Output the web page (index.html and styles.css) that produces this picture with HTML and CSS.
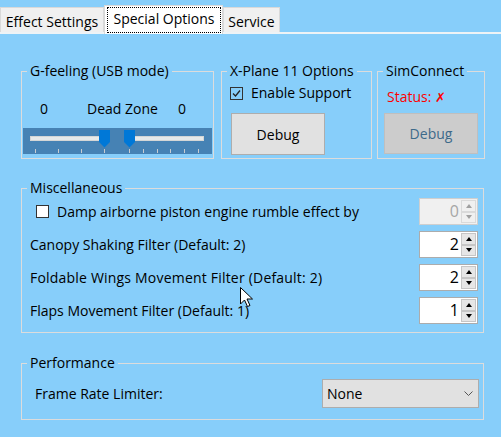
FILE: index.html
```html
<!DOCTYPE html>
<html>
<head>
<meta charset="utf-8">
<link rel="stylesheet" href="styles.css">
</head>
<body>
<div class="tabs">
  <div class="tab t1">Effect Settings</div>
  <div class="tab active"><span class="focus">Special Options</span></div>
  <div class="tab t3">Service</div>
</div>
<div class="page">
  <div class="toprow">
    <fieldset class="group gfeel">
      <legend>G-feeling (USB mode)</legend>
      <div class="dz"><span>0</span><span class="dzl">Dead Zone</span><span class="dzr">0</span></div>
      <div class="slider">
        <svg width="189" height="26" viewBox="0 0 189 26">
          <rect x="7.5" y="8.5" width="69" height="4" fill="#e7eaea" stroke="#d4d6d6"/>
          <rect x="111.5" y="8.5" width="69" height="4" fill="#e7eaea" stroke="#d4d6d6"/>
          <g stroke="#c9ccd0" stroke-width="1">
            <line x1="12.5" y1="21" x2="12.5" y2="25"/>
            <line x1="35.5" y1="21" x2="35.5" y2="25"/>
            <line x1="58.5" y1="21" x2="58.5" y2="25"/>
            <line x1="81.5" y1="21" x2="81.5" y2="25"/>
            <line x1="106.5" y1="21" x2="106.5" y2="25"/>
            <line x1="120.5" y1="21" x2="120.5" y2="25"/>
            <line x1="134.5" y1="21" x2="134.5" y2="25"/>
            <line x1="147.5" y1="21" x2="147.5" y2="25"/>
            <line x1="161.5" y1="21" x2="161.5" y2="25"/>
            <line x1="175.5" y1="21" x2="175.5" y2="25"/>
          </g>
          <polygon points="76,2 87,2 87,14 81.5,19.5 76,14" fill="#0078d7"/>
          <polygon points="101,2 112,2 112,14 106.5,19.5 101,14" fill="#0078d7"/>
        </svg>
      </div>
    </fieldset>
    <fieldset class="group xplane">
      <legend>X-Plane 11 Options</legend>
      <div class="check xcheck">
        <span class="box flat">
          <svg width="11" height="11" viewBox="0 0 11 11"><path d="M2 5.5 L4.5 8 L9 2.5" fill="none" stroke="#222" stroke-width="1.3"/></svg>
        </span>
        <span>Enable Support</span>
      </div>
      <button class="btn xbtn">Debug</button>
    </fieldset>
    <fieldset class="group simc">
      <legend>SimConnect</legend>
      <div class="status">Status: <span class="x">✗</span></div>
      <button class="btn sbtn" disabled>Debug</button>
    </fieldset>
  </div>

  <fieldset class="group misc">
    <legend>Miscellaneous</legend>
    <div class="row">
      <div class="check mcheck"><span class="box white"></span><span>Damp airborne piston engine rumble effect by</span></div>
      <div class="spin off"><span class="val">0</span><span class="arrows"><span class="arr up"></span><span class="arr down"></span></span></div>
    </div>
    <div class="row">
      <span>Canopy Shaking Filter (Default: 2)</span>
      <div class="spin"><span class="val">2</span><span class="arrows"><span class="arr up"></span><span class="arr down"></span></span></div>
    </div>
    <div class="row">
      <span class="wide">Foldable Wings Movement Filter (Default: 2)</span>
      <div class="spin"><span class="val">2</span><span class="arrows"><span class="arr up"></span><span class="arr down"></span></span></div>
    </div>
    <div class="row">
      <span>Flaps Movement Filter (Default: 1)</span>
      <div class="spin"><span class="val">1</span><span class="arrows"><span class="arr up"></span><span class="arr down"></span></span></div>
    </div>
  </fieldset>

  <fieldset class="group perf">
    <legend>Performance</legend>
    <div class="prow">
      <span>Frame Rate Limiter:</span>
      <div class="combo"><span>None</span>
        <svg width="9" height="6" viewBox="0 0 9 6"><path d="M0.5 0.5 L4.5 4.5 L8.5 0.5" fill="none" stroke="#555" stroke-width="1"/></svg>
      </div>
    </div>
  </fieldset>
</div>

<svg class="cursor" width="13" height="21" viewBox="0 0 13 21">
  <path d="M0.5 0.5 L0.5 17 L4.5 13 L7.5 19.5 L10 18.5 L7 12 L12.5 12 Z" fill="#fff" stroke="#000" stroke-width="1"/>
</svg>
</body>
</html>
```
FILE: styles.css
```css
html, body {
  margin: 0;
  padding: 0;
}
body {
  background: #87cefa;
  width: 501px;
  height: 437px;
  overflow: hidden;
  position: relative;
  font-family: "Open Sans", "DejaVu Sans", sans-serif;
  font-size: 14px;
  color: #000;
}

/* tabs */
.tabs {
  display: flex;
  align-items: flex-end;
  height: 32px;
  border-bottom: 2px solid #eef3f6;
}
.tab {
  box-sizing: border-box;
  height: 25px;
  background: #f0f0f0;
  border: 1px solid #d9d9d9;
  border-bottom: none;
  padding-top: 5px;
  line-height: 18px;
  text-align: center;
  white-space: nowrap;
}
.t1 { width: 104px; }
.t3 { width: 57px; }
.tab.active {
  width: 119px;
  height: 29px;
  margin-bottom: -2px;
  background: #fff;
  padding: 1px 1px 0 2px;
  position: relative;
  z-index: 1;
}
.focus {
  display: block;
  box-sizing: border-box;
  height: 26px;
  border: 1px dotted #000;
  padding-top: 2px;
  line-height: 18px;
}

/* page */
.page {
  padding: 28px 0 0 21px;
}
.toprow {
  display: flex;
  align-items: flex-start;
}
.group {
  margin: 0;
  padding: 0;
  border: 1px solid #dcdcdc;
  min-width: 0;
  box-sizing: border-box;
}
.group legend {
  margin-left: 5px;
  padding: 0 3px;
  line-height: 18px;
}
.gfeel { width: 193px; padding-bottom: 4px; }
.xplane { width: 151px; margin-left: 7px; padding-bottom: 3px; }
.simc { width: 108px; margin-left: 5px; padding-bottom: 4px; }

.dz {
  display: flex;
  margin-top: 20px;
  padding-left: 18px;
  line-height: 18px;
}
.dzl { margin-left: 39px; }
.dzr { margin-left: 20px; }
.slider {
  margin: 10px 0 0 1px;
  width: 189px;
  height: 26px;
  background: #4682b4;
}
.slider svg { display: block; }

.check {
  display: flex;
  align-items: center;
  line-height: 18px;
}
.box {
  box-sizing: border-box;
  width: 13px;
  height: 13px;
  display: flex;
  align-items: center;
  justify-content: center;
}
.box.flat { border: 1px solid #333; }
.box.white { background: #fff; border: 1px solid #333; }
.xcheck { margin: 4px 0 0 8px; }
.xcheck .box { margin-right: 8px; }

.btn {
  display: block;
  box-sizing: border-box;
  width: 94px;
  background: #e1e1e1;
  border: 1px solid #adadad;
  font: inherit;
  color: #000;
  padding: 0;
}
.xbtn { height: 42px; margin: 11px 0 0 9px; }
.sbtn {
  height: 41px;
  margin: 7px 0 0 6px;
  background: #cccccc;
  border-color: #bfbfbf;
  color: #3d6a8a;
}
.status {
  margin: 8px 0 0 9px;
  height: 18px;
  line-height: 18px;
  color: #f00;
  overflow: hidden;
}
.status .x {
  font-family: "DejaVu Sans", sans-serif;
  font-size: 13px;
  line-height: 0;
}

/* misc */
.misc {
  width: 463px;
  margin-top: 20px;
  padding: 1px 0 8px 0;
  display: flex;
  flex-direction: column;
  gap: 6px;
}
.row {
  display: flex;
  align-items: center;
  justify-content: space-between;
  height: 27px;
  padding: 0 5px 0 8px;
  white-space: nowrap;
}
.wide { letter-spacing: 0.2px; }
.mcheck { margin-left: 6px; }
.mcheck .box { margin-right: 8px; }

.spin {
  box-sizing: border-box;
  width: 59px;
  height: 27px;
  display: flex;
  background: #fff;
  border: 1px solid #acacac;
  padding: 1px;
}
.val {
  flex: 1;
  text-align: right;
  padding-right: 2px;
  font-size: 16px;
  line-height: 23px;
}
.arrows {
  width: 15px;
  display: flex;
  flex-direction: column;
}
.arr {
  flex: 1;
  box-sizing: border-box;
  background: #e6e6e6;
  border: 1px solid #c6c6c6;
  display: flex;
  align-items: center;
  justify-content: center;
}
.arr::before {
  content: "";
  width: 0;
  height: 0;
  border-left: 3px solid transparent;
  border-right: 3px solid transparent;
}
.up::before { border-bottom: 4px solid #000; }
.down::before { border-top: 4px solid #000; }
.spin.off { background: #f0f0f0; border-color: #cfcfcf; }
.spin.off .val { color: #a6a6a6; }
.spin.off .arr { background: #f0f0f0; border-color: #dadada; }
.spin.off .up::before { border-bottom-color: #a0a0a0; }
.spin.off .down::before { border-top-color: #a0a0a0; }

/* performance */
.perf {
  width: 463px;
  margin-top: 21px;
  padding: 7px 0 11px 0;
}
.prow {
  display: flex;
  align-items: center;
  justify-content: space-between;
  padding: 0 4px 0 13px;
}
.combo {
  box-sizing: border-box;
  width: 157px;
  height: 29px;
  background: #e1e1e1;
  border: 1px solid #adadad;
  display: flex;
  align-items: center;
  justify-content: space-between;
  padding: 0 5px 0 4px;
  font-size: 14px;
}
.combo svg { display: block; }

.cursor {
  position: absolute;
  left: 240px;
  top: 287px;
}
```
